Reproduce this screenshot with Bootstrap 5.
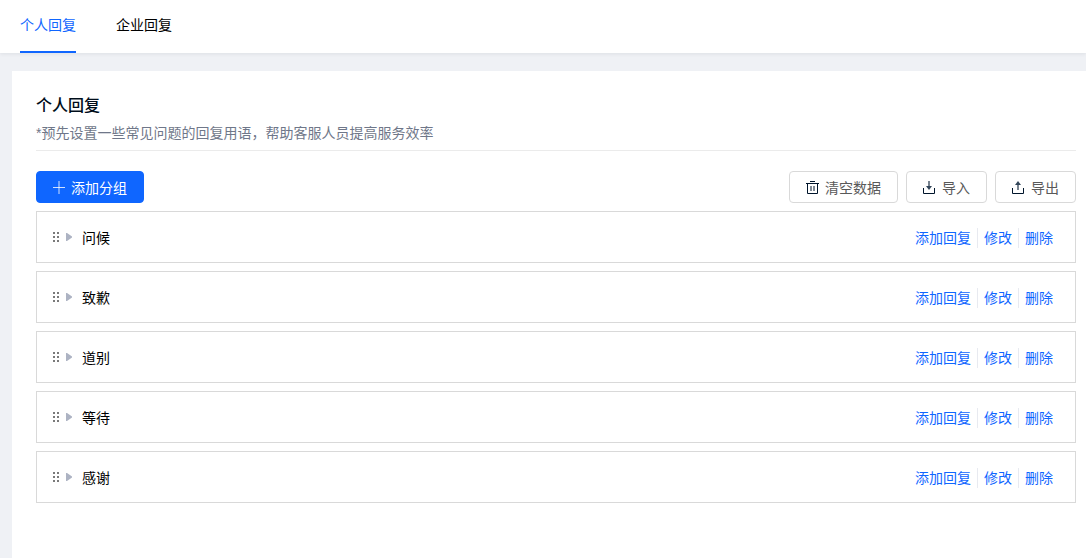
<!DOCTYPE html>
<html lang="zh-CN">
<head>
<meta charset="utf-8">
<meta name="viewport" content="width=device-width, initial-scale=1">
<title>个人回复</title>
<link href="https://cdn.jsdelivr.net/npm/bootstrap@5.3.0/dist/css/bootstrap.min.css" rel="stylesheet">
<style>
  body { font: 14px/22px "Liberation Sans", "Noto Sans CJK SC", sans-serif; color: #000; background: #eff1f5; }
  a { text-decoration: none; }
  .top-tabs { height: 53px; gap: 40px; padding: 0 20px; box-shadow: 0 1px 4px rgba(0, 21, 41, .08); }
  .top-tabs .nav-link { padding: 14px 0 15px; color: #000; border-bottom: 2px solid transparent; }
  .top-tabs .nav-link.active { color: #0f66ff; border-color: #0f66ff; }
  .panel { margin: 18px 0 0 12px; padding: 23px 10px 24px 24px; }
  .panel-title { font-size: 16px; line-height: 24px; font-weight: 500; color: #000d1a; }
  .panel-note { color: #6f7789; padding: 4px 0 6px; border-bottom: 1px solid #ebebeb; margin-bottom: 20px; }
  .btn { --bs-btn-font-size: 14px; --bs-btn-line-height: 22px; --bs-btn-border-radius: 4px; }
  .btn-add, .btn-tool { padding: 5px 16px 3px; gap: 5px; }
  .btn-add { --bs-btn-color: #fff; --bs-btn-bg: #0f66ff; --bs-btn-border-color: #0f66ff; --bs-btn-hover-color: #fff; --bs-btn-hover-bg: #3d85ff; padding-left: 15px; }
  .btn-tool { --bs-btn-color: #595959; --bs-btn-bg: #fff; --bs-btn-border-color: #d9d9d9; --bs-btn-hover-color: #0f66ff; --bs-btn-hover-border-color: #0f66ff; }
  .btn-tool svg { color: #00152b; }
  .groups { gap: 8px; margin-top: 8px; }
  .group-row { height: 52px; border: 1px solid #d9d9d9; padding: 0 16px 0 15px; }
  .toggle { width: 14px; height: 22px; margin: 0 6px 0 3px; }
  .group-name, .actions { padding-top: 2px; }
  .actions a { color: #0f66ff; padding: 0 6px; line-height: 20px; }
  .actions a + a { box-shadow: inset 1px 0 #e8eaf0; padding-left: 7px; }
</style>
</head>
<body class="d-flex flex-column min-vh-100">
<svg class="d-none" aria-hidden="true">
  <symbol id="grip" viewBox="0 0 7 12"><path fill="#7a7a7a" d="M1 1h2v2H1zM5 1h2v2H5zM1 5h2v2H1zM5 5h2v2H5zM1 9h2v2H1zM5 9h2v2H5z"/></symbol>
  <symbol id="caret" viewBox="0 0 6 8"><path fill="#adb3c3" d="M0 0h1l5 3.5v1L1 8H0z"/></symbol>
</svg>

<header class="bg-white">
  <nav class="nav top-tabs">
    <a class="nav-link active" href="#" aria-current="page">个人回复</a>
    <a class="nav-link" href="#">企业回复</a>
  </nav>
</header>

<main class="panel bg-white flex-grow-1">
  <h1 class="panel-title mb-0">个人回复</h1>
  <p class="panel-note">*预先设置一些常见问题的回复用语，帮助客服人员提高服务效率</p>

  <div class="d-flex justify-content-between">
    <button type="button" class="btn btn-add d-flex align-items-center">
      <svg width="14" height="14" fill="none" stroke="currentColor" stroke-opacity=".8" aria-hidden="true"><path d="M1 6.5h12M7 0v13"/></svg>添加分组
    </button>
    <div class="d-flex gap-2">
      <button type="button" class="btn btn-tool d-flex align-items-center">
        <svg width="14" height="14" fill="none" stroke="currentColor" aria-hidden="true"><path d="M4 .5h5M0 2.5h13M1.5 3v9.5h10V3M5 5v5M8 5v5"/></svg>清空数据
      </button>
      <button type="button" class="btn btn-tool d-flex align-items-center">
        <svg width="14" height="14" fill="none" stroke="currentColor" aria-hidden="true"><path d="M.5 7v5.5h11V7"/><path stroke="#4d5b6b" stroke-width="1.5" d="M6 0v6"/><path fill="#33465a" stroke="none" d="M3 5h6L6 9z"/></svg>导入
      </button>
      <button type="button" class="btn btn-tool d-flex align-items-center">
        <svg width="14" height="14" fill="none" stroke="currentColor" aria-hidden="true"><path d="M.5 7v5.5h11V7"/><path stroke="#4d5b6b" stroke-width="1.5" d="M6 3v6"/><path fill="#33465a" stroke="none" d="M3 4h6L6 0z"/></svg>导出
      </button>
    </div>
  </div>

  <ul class="groups list-unstyled d-flex flex-column mb-0">
    <li class="group-row d-flex align-items-center">
      <svg width="7" height="12" aria-hidden="true"><use href="#grip"/></svg>
      <button type="button" class="toggle btn p-0 border-0 d-flex align-items-center justify-content-center" aria-label="展开"><svg width="6" height="8"><use href="#caret"/></svg></button>
      <span class="group-name">问候</span>
      <div class="actions d-flex ms-auto"><a href="#">添加回复</a><a href="#">修改</a><a href="#">删除</a></div>
    </li>
    <li class="group-row d-flex align-items-center">
      <svg width="7" height="12" aria-hidden="true"><use href="#grip"/></svg>
      <button type="button" class="toggle btn p-0 border-0 d-flex align-items-center justify-content-center" aria-label="展开"><svg width="6" height="8"><use href="#caret"/></svg></button>
      <span class="group-name">致歉</span>
      <div class="actions d-flex ms-auto"><a href="#">添加回复</a><a href="#">修改</a><a href="#">删除</a></div>
    </li>
    <li class="group-row d-flex align-items-center">
      <svg width="7" height="12" aria-hidden="true"><use href="#grip"/></svg>
      <button type="button" class="toggle btn p-0 border-0 d-flex align-items-center justify-content-center" aria-label="展开"><svg width="6" height="8"><use href="#caret"/></svg></button>
      <span class="group-name">道别</span>
      <div class="actions d-flex ms-auto"><a href="#">添加回复</a><a href="#">修改</a><a href="#">删除</a></div>
    </li>
    <li class="group-row d-flex align-items-center">
      <svg width="7" height="12" aria-hidden="true"><use href="#grip"/></svg>
      <button type="button" class="toggle btn p-0 border-0 d-flex align-items-center justify-content-center" aria-label="展开"><svg width="6" height="8"><use href="#caret"/></svg></button>
      <span class="group-name">等待</span>
      <div class="actions d-flex ms-auto"><a href="#">添加回复</a><a href="#">修改</a><a href="#">删除</a></div>
    </li>
    <li class="group-row d-flex align-items-center">
      <svg width="7" height="12" aria-hidden="true"><use href="#grip"/></svg>
      <button type="button" class="toggle btn p-0 border-0 d-flex align-items-center justify-content-center" aria-label="展开"><svg width="6" height="8"><use href="#caret"/></svg></button>
      <span class="group-name">感谢</span>
      <div class="actions d-flex ms-auto"><a href="#">添加回复</a><a href="#">修改</a><a href="#">删除</a></div>
    </li>
  </ul>
</main>
<script src="https://cdn.jsdelivr.net/npm/bootstrap@5.3.0/dist/js/bootstrap.bundle.min.js"></script>
</body>
</html>
